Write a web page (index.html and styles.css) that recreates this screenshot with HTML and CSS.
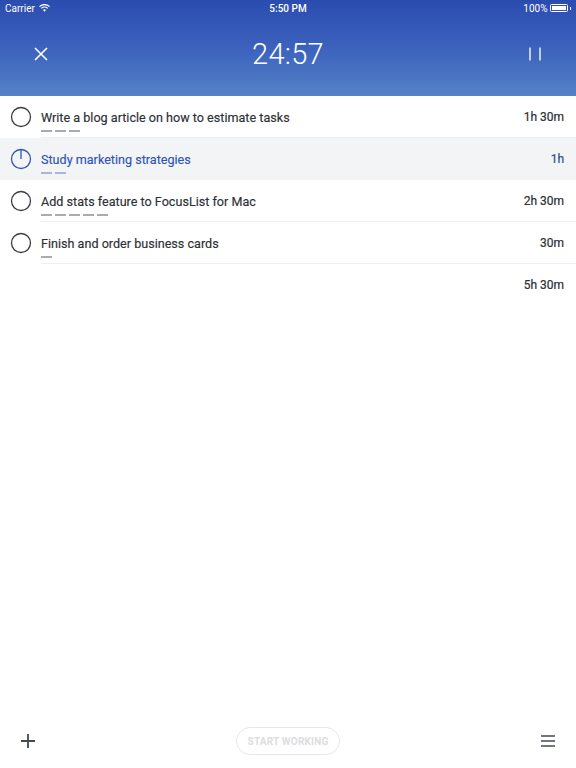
FILE: index.html
```html
<!DOCTYPE html>
<html>
<head>
<meta charset="utf-8">
<link rel="stylesheet" href="styles.css">
</head>
<body>
<div class="app">
  <header class="header">
    <div class="status">
      <div class="status-left">Carrier
        <svg class="wifi" width="11" height="8" viewBox="0 0 11 8"><path d="M0.5 2.6 A7.2 7.2 0 0 1 10.5 2.6" fill="none" stroke="#fff" stroke-width="1.3"/><path d="M2.3 4.4 A4.6 4.6 0 0 1 8.7 4.4" fill="none" stroke="#fff" stroke-width="1.3"/><path d="M4 6.1 A2.1 2.1 0 0 1 7 6.1 L5.5 7.7 Z" fill="#fff"/></svg>
      </div>
      <div class="status-center">5:50 PM</div>
      <div class="status-right">100%
        <span class="battery"><span class="battery-fill"></span></span><span class="battery-tip"></span>
      </div>
    </div>
    <div class="timer-bar">
      <svg class="icon-close" width="14" height="14" viewBox="0 0 14 14"><path d="M1 1 L13 13 M13 1 L1 13" stroke="#fff" stroke-width="1.6" fill="none"/></svg>
      <div class="timer">24:57</div>
      <svg class="icon-pause" width="14" height="14" viewBox="0 0 14 14"><path d="M2 0.5 V13.5 M12 0.5 V13.5" stroke="rgba(255,255,255,0.85)" stroke-width="1.6" fill="none"/></svg>
    </div>
  </header>

  <ul class="tasks">
    <li class="task">
      <svg class="check" width="22" height="22" viewBox="0 0 22 22"><circle cx="11" cy="11" r="9.5" fill="none" stroke="#3a3d44" stroke-width="1.3"/></svg>
      <div class="task-body">
        <div class="task-title">Write a blog article on how to estimate tasks</div>
        <div class="dashes"><span></span><span></span><span></span></div>
      </div>
      <div class="task-time">1h 30m</div>
    </li>
    <li class="task task-active">
      <svg class="check" width="22" height="22" viewBox="0 0 22 22"><circle cx="11" cy="11" r="9.5" fill="none" stroke="#2f55b5" stroke-width="1.3"/><path d="M11 1.5 V11" stroke="#2f55b5" stroke-width="1.3"/></svg>
      <div class="task-body">
        <div class="task-title">Study marketing strategies</div>
        <div class="dashes"><span></span><span></span></div>
      </div>
      <div class="task-time">1h</div>
    </li>
    <li class="task">
      <svg class="check" width="22" height="22" viewBox="0 0 22 22"><circle cx="11" cy="11" r="9.5" fill="none" stroke="#3a3d44" stroke-width="1.3"/></svg>
      <div class="task-body">
        <div class="task-title">Add stats feature to FocusList for Mac</div>
        <div class="dashes"><span></span><span></span><span></span><span></span><span></span></div>
      </div>
      <div class="task-time">2h 30m</div>
    </li>
    <li class="task">
      <svg class="check" width="22" height="22" viewBox="0 0 22 22"><circle cx="11" cy="11" r="9.5" fill="none" stroke="#3a3d44" stroke-width="1.3"/></svg>
      <div class="task-body">
        <div class="task-title">Finish and order business cards</div>
        <div class="dashes"><span></span></div>
      </div>
      <div class="task-time">30m</div>
    </li>
  </ul>
  <div class="total">5h 30m</div>

  <div class="spacer"></div>

  <footer class="footer">
    <svg class="icon-add" width="16" height="16" viewBox="0 0 16 16"><path d="M8 1 V15 M1 8 H15" stroke="#444954" stroke-width="1.8" fill="none"/></svg>
    <button class="start">START WORKING</button>
    <svg class="icon-menu" width="16" height="12" viewBox="0 0 16 12"><path d="M1 1 H15 M1 6 H15 M1 11 H15" stroke="#444954" stroke-width="1.6" fill="none"/></svg>
  </footer>
</div>
</body>
</html>
```
FILE: styles.css
```css
* { box-sizing: border-box; }
html, body { margin: 0; padding: 0; }
body {
  width: 576px;
  height: 768px;
  background: #fff;
  font-family: Roboto, "Liberation Sans", sans-serif;
  overflow: hidden;
}
.app {
  display: flex;
  flex-direction: column;
  height: 768px;
}
.header {
  height: 96px;
  background: linear-gradient(180deg, #2a4cb0 0%, #3c62bd 50%, #5581c8 100%);
  color: #fff;
  display: flex;
  flex-direction: column;
}
.status {
  height: 16px;
  display: flex;
  align-items: center;
  justify-content: space-between;
  padding: 0 5px;
  font-size: 10px;
  position: relative;
}
.status-left { display: flex; align-items: center; gap: 4px; }
.status-center {
  position: absolute;
  left: 0; right: 0;
  text-align: center;
  font-weight: 500;
}
.status-right { display: flex; align-items: center; gap: 2px; }
.battery {
  width: 18px; height: 8px;
  border: 1px solid #fff;
  border-radius: 1.5px;
  padding: 1px;
  display: flex;
}
.battery-fill { flex: 1; background: #fff; }
.battery-tip { width: 1.5px; height: 3px; background: #fff; }
.timer-bar {
  flex: 1;
  display: flex;
  align-items: center;
  justify-content: space-between;
  padding: 0 34px 4px 34px;
}
.timer {
  font-size: 29px;
  font-weight: 300;
  letter-spacing: 0.3px;
}
.tasks {
  list-style: none;
  margin: 0;
  padding: 0;
}
.task {
  height: 42px;
  display: flex;
  align-items: center;
  padding: 0 12px 0 10px;
  position: relative;
}
.task::after {
  content: "";
  position: absolute;
  left: 41px; right: 0; bottom: 0;
  height: 1px;
  background: #eeeff2;
}
.task-active { background: #f3f4f6; }
.task-active::after { display: none; }
.check { flex: none; margin-right: 9px; }
.task-body {
  flex: 1;
  display: flex;
  flex-direction: column;
  padding-top: 8px;
}
.task-title {
  font-size: 12.6px;
  color: #2c2f36;
  line-height: 16px;
  -webkit-text-stroke: 0.15px #2c2f36;
}
.task-active .task-title { color: #2f55b5; -webkit-text-stroke: 0.15px #2f55b5; }
.task-active .task-time { color: #2f55b5; }
.dashes {
  display: flex;
  gap: 3px;
  margin-top: 4px;
  height: 2px;
}
.dashes span {
  width: 11px;
  height: 1.5px;
  background: #a9abb3;
}
.task-active .dashes span { background: #a9b6dc; }
.task-time {
  font-size: 12px;
  font-weight: 400;
  color: #2c2f36;
  -webkit-text-stroke: 0.2px #2c2f36;
}
.total {
  height: 42px;
  display: flex;
  align-items: center;
  justify-content: flex-end;
  padding-right: 12px;
  font-size: 12px;
  font-weight: 400;
  color: #2c2f36;
  -webkit-text-stroke: 0.2px #2c2f36;
}
.spacer { flex: 1; }
.footer {
  height: 54px;
  display: flex;
  align-items: center;
  justify-content: space-between;
  padding: 0 20px 0 20px;
}
.start {
  width: 104px;
  height: 28px;
  border: 1px solid #e6e7ea;
  border-radius: 14px;
  background: #fff;
  color: #dcdde1;
  font-family: Roboto, "Liberation Sans", sans-serif;
  font-size: 10px;
  font-weight: 700;
  letter-spacing: 0.2px;
  padding: 0;
}
```
